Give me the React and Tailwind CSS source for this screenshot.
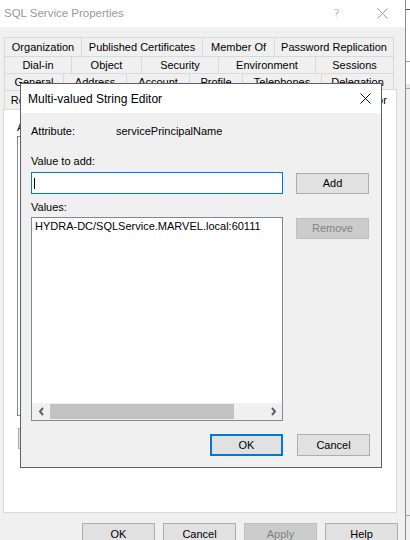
import React from 'react';

const tabRows = [
  { h: 'h-[19px]', tabs: [['Organization', 'w-[78px]'], ['Published Certificates', 'w-[121px]'], ['Member Of', 'w-[72px]'], ['Password Replication', 'w-[119px]']] },
  { h: 'h-[17px]', tabs: [['Dial-in', 'w-[68px]'], ['Object', 'w-[70px]'], ['Security', 'w-[77px]'], ['Environment', 'w-[97px]'], ['Sessions', 'w-[78px]']] },
  { h: 'h-[17px]', tabs: [['General', 'w-[60px]'], ['Address', 'w-[63px]'], ['Account', 'w-[63px]'], ['Profile', 'w-[53px]'], ['Telephones', 'w-[79px]'], ['Delegation', 'w-[72px]']] },
];

function Tab({ label, width, height }) {
  return (
    <div className={`${width} ${height} flex items-center justify-center border-t border-r border-[#d9d9d9] first:border-l bg-[#f0f0f0] whitespace-nowrap overflow-hidden`}>
      {label}
    </div>
  );
}

function WinButton({ children, className = '', disabled = false, primary = false }) {
  let look = 'bg-[#e1e1e1] border border-[#adadad] text-black';
  if (disabled) look = 'bg-[#cccccc] border border-[#bfbfbf] text-[#838383]';
  if (primary) look = 'bg-[#e1e1e1] border-2 border-[#0078d7] text-black';
  return (
    <div className={`w-[73px] flex items-center justify-center shrink-0 ${look} ${className}`}>
      {children}
    </div>
  );
}

function Chevron({ dir }) {
  return (
    <svg width="7" height="9" viewBox="0 0 7 9">
      {dir === 'left' ? (
        <polyline points="5,1 2,4.5 5,8" fill="none" stroke="#606060" strokeWidth="2" />
      ) : (
        <polyline points="2,1 5,4.5 2,8" fill="none" stroke="#606060" strokeWidth="2" />
      )}
    </svg>
  );
}

function StringEditor() {
  return (
    <div className="absolute z-20 left-[20px] top-[83px] w-[362px] h-[385px] border border-[#5f5f5f] bg-[#f0f0f0] flex flex-col">
      {/* title bar */}
      <div className="h-[29px] bg-white flex items-center justify-between pl-[7px] pr-[10px] text-[12px] text-black">
        <span>Multi-valued String Editor</span>
        <svg width="11" height="11" viewBox="0 0 11 11">
          <path d="M0.5 0.5 L10.5 10.5 M10.5 0.5 L0.5 10.5" stroke="#111" strokeWidth="1" />
        </svg>
      </div>

      {/* body */}
      <div className="flex flex-col pl-[10px] pr-[11px] pt-[12px]">
        <div className="flex h-[13px] leading-[13px]">
          <span className="w-[85px]">Attribute:</span>
          <span>servicePrincipalName</span>
        </div>

        <div className="mt-[17px] h-[13px] leading-[13px]">Value to add:</div>

        <div className="mt-[4px] flex items-start gap-[13px]">
          <div className="w-[252px] h-[22px] border border-[#0078d7] bg-white flex items-center">
            <div className="ml-[2px] w-px h-[11px] bg-black" />
          </div>
          <WinButton className="h-[21px] mt-[1px]">Add</WinButton>
        </div>

        <div className="mt-[7px] h-[13px] leading-[13px]">Values:</div>

        <div className="mt-[3px] flex items-start gap-[13px]">
          <div className="w-[252px] h-[204px] border border-[#828790] bg-white flex flex-col">
            <div className="pl-[3px] pt-[2px] h-[13px] leading-[13px] whitespace-nowrap">HYDRA-DC/SQLService.MARVEL.local:60111</div>
            <div className="flex-1" />
            <div className="h-[17px] bg-[#f0f0f0] flex items-stretch">
              <div className="w-[18px] flex items-center justify-center">
                <Chevron dir="left" />
              </div>
              <div className="w-[184px] bg-[#c2c2c2] my-[1px]" />
              <div className="flex-1" />
              <div className="w-[17px] flex items-center justify-center">
                <Chevron dir="right" />
              </div>
            </div>
          </div>
          <WinButton disabled className="h-[21px] mt-[1px]">Remove</WinButton>
        </div>

        <div className="mt-[13px] flex justify-end gap-[14px]">
          <WinButton primary className="h-[22px]">OK</WinButton>
          <WinButton className="h-[22px]">Cancel</WinButton>
        </div>
      </div>
    </div>
  );
}

export default function App() {
  return (
    <div className="relative w-[410px] h-[540px] flex overflow-hidden font-['Liberation_Sans',Arial,sans-serif] text-[11px] text-black">
      {/* SQL Service Properties window */}
      <div className="w-[405px] shrink-0 flex flex-col bg-[#f0f0f0]">
        <div className="h-[27px] shrink-0 bg-white flex items-center text-[#999999] text-[11.5px]">
          <span className="pl-[4px]">SQL Service Properties</span>
          <span className="ml-auto text-[13px] font-['DejaVu_Sans',sans-serif] font-extralight">?</span>
          <svg className="ml-[37px] mr-[17px]" width="11" height="11" viewBox="0 0 11 11">
            <path d="M0.5 0.5 L10.5 10.5 M10.5 0.5 L0.5 10.5" stroke="#9a9a9a" strokeWidth="1" />
          </svg>
        </div>

        <div className="flex flex-col pt-[10px] pl-[3px]">
          <div className="ml-[1px] flex flex-col">
            {tabRows.map((row, i) => (
              <div key={i} className="flex">
                {row.tabs.map(([label, w]) => (
                  <Tab key={label} label={label} width={w} height={row.h} />
                ))}
              </div>
            ))}
            <div className="flex items-end h-[20px] -mt-[1px]">
              <Tab label="Remote control" width="w-[88px]" height="h-[19px]" />
              <Tab label="Remote Desktop Services Profile" width="w-[168px]" height="h-[19px]" />
              <Tab label="COM+" width="w-[46px]" height="h-[19px]" />
              <div className="relative z-10 -ml-[2px] -mb-[1px] w-[93px] h-[21px] bg-white border-t border-l border-r border-[#d9d9d9] flex items-center justify-center whitespace-nowrap">
                Attribute Editor
              </div>
            </div>
          </div>

          {/* tab page */}
          <div className="w-[394px] h-[404px] bg-white border border-[#d9d9d9] flex flex-col pl-[13px] pt-[11px]">
            <div className="h-[13px] leading-[13px]">Attributes:</div>
            <div className="mt-[2px] w-[360px] h-[280px] border border-[#828790]" />
            <div className="mt-[12px] ml-[1px] w-[73px] h-[21px] bg-[#e1e1e1] border border-[#adadad] flex items-center justify-center">Edit</div>
          </div>

          <div className="mt-[10px] flex justify-end gap-[8px] pr-[7px]">
            <WinButton className="h-[23px]">OK</WinButton>
            <WinButton className="h-[23px]">Cancel</WinButton>
            <WinButton disabled className="h-[23px]">Apply</WinButton>
            <WinButton className="h-[23px]">Help</WinButton>
          </div>
        </div>
      </div>

      {/* window behind, at the right edge */}
      <div className="flex-1 border-l border-[#8c8c8c] flex flex-col bg-white">
        <div className="h-[10px] border-b border-[#555555]" />
        <div className="h-[52px] border-b border-[#a0a0a0]" />
        <div className="h-[22px]" />
        <div className="h-[5px] bg-[#e6e6e6] border-b border-[#a0a0a0]" />
        <div className="flex-1 bg-[#f0f0f0] border-b border-[#a0a0a0]" />
        <div className="h-[24px] bg-[#f0f0f0]" />
      </div>

      <StringEditor />
    </div>
  );
}
